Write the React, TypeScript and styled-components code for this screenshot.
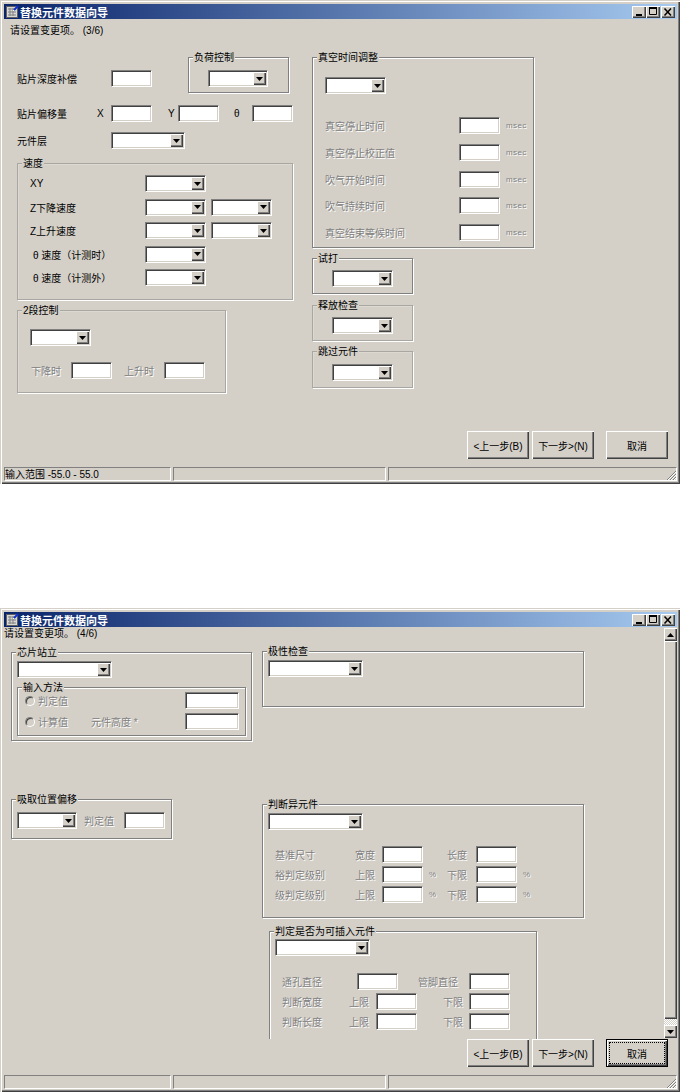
import React from 'react'
import styled, { createGlobalStyle } from 'styled-components'

const GlobalStyle = createGlobalStyle`
  html, body {
    margin: 0;
    padding: 0;
    background: #ffffff;
  }
  body {
    font-family: "Liberation Sans", "Noto Sans CJK SC", sans-serif;
    font-size: 10px;
    color: #000000;
  }
`

const Page = styled.div`
  width: 680px;
  display: flex;
  flex-direction: column;
  gap: 124px;
`

const Win = styled.div`
  box-sizing: border-box;
  height: 484px;
  padding: 4px 3px 3px 4px;
  display: flex;
  flex-direction: column;
  background: #d4d0c8;
  box-shadow: inset 1px 1px 0 #d4d0c8, inset 2px 2px 0 #ffffff, inset -1px -1px 0 #404040, inset -2px -2px 0 #808080;
`

const TitleBar = styled.div`
  flex: none;
  height: 15px;
  display: flex;
  align-items: center;
  padding: 0 2px;
  background: linear-gradient(90deg, #0a246a, #a6caf0);
`

const TitleText = styled.span`
  margin-left: 1px;
  font-size: 11px;
  font-weight: 700;
  color: #ffffff;
  white-space: nowrap;
`

const TitleButtons = styled.div`
  margin-left: auto;
  display: flex;
`

const TitleButton = styled.button<{ $gap?: number }>`
  box-sizing: border-box;
  width: 14px;
  height: 12px;
  padding: 0;
  margin-left: ${p => p.$gap ?? 0}px;
  border: none;
  background: #d4d0c8;
  box-shadow: inset 1px 1px 0 #ffffff, inset -1px -1px 0 #404040, inset -2px -2px 0 #808080;
  display: flex;
  align-items: center;
  justify-content: center;
`

const Client = styled.div`
  flex: 1;
  min-height: 0;
  display: flex;
  flex-direction: column;
`

const Prompt = styled.div<{ $left: number; $top: number; $h: number }>`
  flex: none;
  height: ${p => p.$h}px;
  line-height: ${p => p.$h}px;
  margin-top: ${p => p.$top}px;
  padding-left: ${p => p.$left}px;
  white-space: pre;
`

const Columns = styled.div<{ $left: number; $top: number }>`
  display: flex;
  align-items: flex-start;
  margin-top: ${p => p.$top}px;
  padding-left: ${p => p.$left}px;
`

const Column = styled.div<{ $w: number; $left?: number; $top?: number }>`
  flex: none;
  width: ${p => p.$w}px;
  margin-left: ${p => p.$left ?? 0}px;
  margin-top: ${p => p.$top ?? 0}px;
`

const Group = styled.div<{ $w: number; $h: number; $pad: string; $top?: number; $left?: number; $faint?: boolean }>`
  box-sizing: border-box;
  position: relative;
  width: ${p => p.$w}px;
  height: ${p => p.$h}px;
  margin-top: ${p => p.$top ?? 0}px;
  margin-left: ${p => p.$left ?? 0}px;
  padding: ${p => p.$pad};
  border: 1px solid ${p => (p.$faint ? '#a9a7a1' : '#808080')};
  box-shadow: 1px 1px 0 #ffffff, inset 1px 1px 0 ${p => (p.$faint ? '#dcd9d2' : '#ffffff')};
`

const Legend = styled.span`
  position: absolute;
  top: -6px;
  left: 4px;
  padding: 0 1px;
  line-height: 12px;
  background: #d4d0c8;
  white-space: nowrap;
`

const Row = styled.div<{ $top?: number; $left?: number }>`
  display: flex;
  align-items: center;
  height: 17px;
  margin-top: ${p => p.$top ?? 0}px;
  margin-left: ${p => p.$left ?? 0}px;
`

const HeadRow = styled.div`
  display: flex;
  align-items: flex-start;
  height: 36px;
`

const Rows = styled.div<{ $gap: number; $top?: number; $left?: number }>`
  display: flex;
  flex-direction: column;
  gap: ${p => p.$gap}px;
  margin-top: ${p => p.$top ?? 0}px;
  margin-left: ${p => p.$left ?? 0}px;
`

const Caption = styled.span<{ $w?: number; $indent?: number; $off?: boolean; $small?: boolean }>`
  flex: none;
  box-sizing: border-box;
  width: ${p => (p.$w ? `${p.$w}px` : 'auto')};
  padding-left: ${p => p.$indent ?? 0}px;
  white-space: nowrap;
  font-size: ${p => (p.$small ? 8 : 10)}px;
  letter-spacing: ${p => (p.$small ? 0.4 : 0)}px;
  color: ${p => (p.$off ? '#808080' : '#000000')};
  text-shadow: ${p => (p.$off ? '1px 1px 0 #ffffff' : 'none')};
`

const Input = styled.input<{ $w?: number }>`
  flex: none;
  box-sizing: border-box;
  width: ${p => p.$w ?? 41}px;
  height: 17px;
  margin: 0;
  padding: 0;
  border: 1px solid;
  border-color: #808080 #ffffff #ffffff #808080;
  box-shadow: inset 1px 1px 0 #404040, inset -1px -1px 0 #d4d0c8;
  background: #ffffff;
  outline: none;
`

const SelectBox = styled.div<{ $w: number }>`
  flex: none;
  box-sizing: border-box;
  width: ${p => p.$w}px;
  height: 17px;
  padding: 1px;
  border: 1px solid;
  border-color: #808080 #ffffff #ffffff #808080;
  box-shadow: inset 1px 1px 0 #404040, inset -1px -1px 0 #d4d0c8;
  background: #ffffff;
  display: flex;
  justify-content: flex-end;
`

const SelectArrow = styled.span`
  width: 13px;
  height: 100%;
  background: #d4d0c8;
  box-shadow: inset 1px 1px 0 #ffffff, inset -1px -1px 0 #404040, inset -2px -2px 0 #808080;
  display: flex;
  align-items: center;
  justify-content: center;
`

const Radio = styled.span`
  flex: none;
  box-sizing: border-box;
  width: 10px;
  height: 10px;
  margin-right: 3px;
  border: 1px solid;
  border-radius: 50%;
  border-color: #808080 #ffffff #ffffff #808080;
  background: #d4d0c8;
  box-shadow: inset 1px 1px 0 #404040;
`

const Footer = styled.div`
  flex: none;
  display: flex;
  justify-content: flex-end;
  gap: 3px;
  height: 28px;
  margin-top: auto;
  margin-bottom: 8px;
  padding-right: 9px;
`

const PushButton = styled.button<{ $left?: number; $primary?: boolean }>`
  box-sizing: border-box;
  position: relative;
  width: 62px;
  height: 28px;
  margin: 0 0 0 ${p => p.$left ?? 0}px;
  padding: 0;
  border: ${p => (p.$primary ? '1px solid #000000' : 'none')};
  background: #d4d0c8;
  box-shadow: inset 1px 1px 0 #ffffff, inset -1px -1px 0 #404040, inset -2px -2px 0 #808080;
  font: inherit;
  color: #000000;
  white-space: nowrap;
`

const FocusRing = styled.span`
  position: absolute;
  inset: 2px;
  border: 1px dotted #000000;
`

const StatusBar = styled.div`
  flex: none;
  height: 14px;
  display: flex;
  gap: 2px;
`

const StatusPane = styled.div<{ $w?: number }>`
  box-sizing: border-box;
  position: relative;
  flex: ${p => (p.$w ? `none` : 1)};
  width: ${p => (p.$w ? `${p.$w}px` : 'auto')};
  line-height: 13px;
  border: 1px solid;
  border-color: #808080 #ffffff #ffffff #808080;
  white-space: nowrap;
`

const Grip = styled.svg`
  position: absolute;
  right: -1px;
  bottom: -1px;
`

const ScrollArea = styled.div`
  flex: none;
  height: 412px;
  display: flex;
`

const ScrollContent = styled.div`
  flex: 1;
  min-width: 0;
  overflow: hidden;
`

const ScrollBar = styled.div`
  flex: none;
  width: 13px;
  margin: 1px 0;
  display: flex;
  flex-direction: column;
`

const ScrollArrow = styled.div`
  flex: none;
  height: 13px;
  background: #d4d0c8;
  box-shadow: inset 1px 1px 0 #ffffff, inset -1px -1px 0 #404040, inset -2px -2px 0 #808080;
  display: flex;
  align-items: center;
  justify-content: center;
`

const ScrollThumb = styled.div`
  flex: 1;
  background: #d4d0c8;
  box-shadow: inset 1px 1px 0 #ffffff, inset -1px -1px 0 #404040, inset -2px -2px 0 #808080;
`

const ScrollTrack = styled.div`
  flex: none;
  height: 6px;
  background: repeating-conic-gradient(#ffffff 0 25%, #d4d0c8 0 50%) 0 0 / 2px 2px;
`

const Arrow = ({ up }: { up?: boolean }) => (
  <svg width="7" height="4" viewBox="0 0 7 4">
    <path d={up ? 'M3.5 0 7 4H0z' : 'M0 0h7L3.5 4z'} fill="#000000" />
  </svg>
)

const Select = ({ w }: { w: number }) => (
  <SelectBox $w={w}>
    <SelectArrow>
      <Arrow />
    </SelectArrow>
  </SelectBox>
)

const AppIcon = () => (
  <svg width="13" height="13" viewBox="0 0 13 13">
    <rect x="0.5" y="1.5" width="11" height="11" fill="#d8d8d8" stroke="#606060" />
    <path d="M2 4h8M2 7h8M2 10h8M4 3v8M7 3v8" stroke="#808080" strokeWidth="1" />
    <path d="M8 5 12 1" stroke="#1030d0" strokeWidth="2" />
    <path d="M7 6 8 5" stroke="#ffffff" strokeWidth="1" />
  </svg>
)

const WindowTitle = () => (
  <TitleBar>
    <AppIcon />
    <TitleText>替换元件数据向导</TitleText>
    <TitleButtons>
      <TitleButton>
        <svg width="10" height="8" viewBox="0 0 10 8">
          <rect x="2" y="6" width="6" height="2" fill="#000000" />
        </svg>
      </TitleButton>
      <TitleButton>
        <svg width="10" height="9" viewBox="0 0 10 9">
          <path d="M1.5 1.5h7v6h-7z" fill="none" stroke="#000000" />
          <rect x="1" y="0" width="8" height="2" fill="#000000" />
        </svg>
      </TitleButton>
      <TitleButton $gap={1}>
        <svg width="10" height="8" viewBox="0 0 10 8">
          <path d="M1.5 0.5 8 7.5M8 0.5 1.5 7.5" stroke="#000000" strokeWidth="1.5" />
        </svg>
      </TitleButton>
    </TitleButtons>
  </TitleBar>
)

const WindowFooter = ({ focused }: { focused?: boolean }) => (
  <Footer>
    <PushButton>&lt;上一步(B)</PushButton>
    <PushButton>下一步&gt;(N)</PushButton>
    <PushButton $left={9} $primary={focused}>
      {focused && <FocusRing />}
      取消
    </PushButton>
  </Footer>
)

const WindowStatus = ({ text }: { text?: string }) => (
  <StatusBar>
    <StatusPane $w={167}>{text}</StatusPane>
    <StatusPane $w={213} />
    <StatusPane>
      <Grip width="12" height="12" viewBox="0 0 12 12">
        <path d="M11 2 2 11M11 5 5 11M11 8 8 11" stroke="#808080" />
        <path d="M11 3 3 11M11 6 6 11M11 9 9 11" stroke="#ffffff" />
      </Grip>
    </StatusPane>
  </StatusBar>
)

const vacuumRows = ['真空停止时间', '真空停止校正值', '吹气开始时间', '吹气持续时间', '真空结束等候时间']

const speedRows = [
  { label: 'XY', double: false, indent: 0 },
  { label: 'Z下降速度', double: true, indent: 0 },
  { label: 'Z上升速度', double: true, indent: 0 },
  { label: 'θ 速度（计测时）', double: false, indent: 3 },
  { label: 'θ 速度（计测外）', double: false, indent: 3 },
]

const StepThree = () => (
  <Win>
    <WindowTitle />
    <Client>
      <Prompt $left={6} $top={5} $h={14}>
        请设置变更项。 (3/6)
      </Prompt>
      <Columns $left={13} $top={19}>
        <Column $w={276}>
          <HeadRow>
            <Row $top={13}>
              <Caption $w={94}>贴片深度补偿</Caption>
              <Input />
              <Caption $w={36} />
            </Row>
            <Group $w={101} $h={36} $pad="12px 0 0 19px">
              <Legend>负荷控制</Legend>
              <Select w={60} />
            </Group>
          </HeadRow>
          <Row $top={12}>
            <Caption $w={80}>贴片偏移量</Caption>
            <Caption $w={14}>X</Caption>
            <Input />
            <Caption $w={26} $indent={16}>Y</Caption>
            <Input />
            <Caption $w={33} $indent={15}>θ</Caption>
            <Input />
          </Row>
          <Row $top={10}>
            <Caption $w={94}>元件层</Caption>
            <Select w={74} />
          </Row>
          <Group $w={276} $h={137} $top={14} $pad="11px 0 0 12px" $faint>
            <Legend>速度</Legend>
            <Rows $gap={6.5}>
              {speedRows.map(row => (
                <Row key={row.label}>
                  <Caption $w={115} $indent={row.indent}>{row.label}</Caption>
                  <Select w={61} />
                  {row.double && <Caption $w={5} />}
                  {row.double && <Select w={61} />}
                </Row>
              ))}
            </Rows>
          </Group>
          <Group $w={209} $h={83} $top={10} $pad="18px 0 0 12px" $faint>
            <Legend>2段控制</Legend>
            <Select w={61} />
            <Row $top={16}>
              <Caption $w={41} $indent={1} $off>下降时</Caption>
              <Input />
              <Caption $w={52} $indent={12} $off>上升时</Caption>
              <Input />
            </Row>
          </Group>
        </Column>
        <Column $w={222} $left={19}>
          <Group $w={222} $h={191} $pad="19px 0 0 12px">
            <Legend>真空时间调整</Legend>
            <Select w={61} />
            <Rows $gap={9.75} $top={23}>
              {vacuumRows.map(label => (
                <Row key={label}>
                  <Caption $w={134} $off>{label}</Caption>
                  <Input />
                  <Caption $indent={6} $off $small>msec</Caption>
                </Row>
              ))}
            </Rows>
          </Group>
          <Group $w={101} $h={36} $top={10} $pad="11px 0 0 19px">
            <Legend>试打</Legend>
            <Select w={61} />
          </Group>
          <Group $w={101} $h={36} $top={11} $pad="11px 0 0 19px" $faint>
            <Legend>释放检查</Legend>
            <Select w={61} />
          </Group>
          <Group $w={101} $h={37} $top={10} $pad="12px 0 0 19px" $faint>
            <Legend>跳过元件</Legend>
            <Select w={61} />
          </Group>
        </Column>
      </Columns>
      <WindowFooter />
    </Client>
    <WindowStatus text="输入范围 -55.0 - 55.0" />
  </Win>
)

const StepFour = () => (
  <Win>
    <WindowTitle />
    <Client>
      <ScrollArea>
        <ScrollContent>
          <Prompt $left={0} $top={0} $h={13}>
            请设置变更项。 (4/6)
          </Prompt>
          <Columns $left={7} $top={0}>
            <Column $w={241}>
              <Group $w={241} $h={89} $top={12} $pad="8px 0 0 5px">
                <Legend>芯片站立</Legend>
                <Select w={95} />
                <Group $w={229} $h={49} $top={9} $pad="4px 6px 0 7px">
                  <Legend>输入方法</Legend>
                  <Rows $gap={4}>
                    <Row>
                      <Radio />
                      <Caption $w={147} $off>判定值</Caption>
                      <Input $w={54} />
                    </Row>
                    <Row>
                      <Radio />
                      <Caption $w={53} $off>计算值</Caption>
                      <Caption $w={94} $off>元件高度 *</Caption>
                      <Input $w={54} />
                    </Row>
                  </Rows>
                </Group>
              </Group>
              <Group $w={161} $h={40} $top={58} $pad="12px 0 0 5px">
                <Legend>吸取位置偏移</Legend>
                <Row>
                  <Select w={60} />
                  <Caption $w={47} $indent={7} $off>判定值</Caption>
                  <Input />
                </Row>
              </Group>
            </Column>
            <Column $w={322} $left={10}>
              <Group $w={322} $h={56} $top={11} $pad="8px 0 0 5px">
                <Legend>极性检查</Legend>
                <Select w={95} />
              </Group>
              <Group $w={322} $h={114} $top={97} $pad="8px 0 0 5px">
                <Legend>判断异元件</Legend>
                <Select w={95} />
                <Rows $gap={3} $top={16} $left={7}>
                  <Row>
                    <Caption $w={80} $off>基准尺寸</Caption>
                    <Caption $w={27} $off>宽度</Caption>
                    <Input />
                    <Caption $w={24} />
                    <Caption $w={29} $off>长度</Caption>
                    <Input />
                  </Row>
                  <Row>
                    <Caption $w={80} $off>裕判定级别</Caption>
                    <Caption $w={27} $off>上限</Caption>
                    <Input />
                    <Caption $w={24} $indent={6} $off $small>%</Caption>
                    <Caption $w={29} $off>下限</Caption>
                    <Input />
                    <Caption $indent={6} $off $small>%</Caption>
                  </Row>
                  <Row>
                    <Caption $w={80} $off>级判定级别</Caption>
                    <Caption $w={27} $off>上限</Caption>
                    <Input />
                    <Caption $w={24} $indent={6} $off $small>%</Caption>
                    <Caption $w={29} $off>下限</Caption>
                    <Input />
                    <Caption $indent={6} $off $small>%</Caption>
                  </Row>
                </Rows>
              </Group>
              <Group $w={268} $h={130} $top={13} $left={7} $pad="7px 0 0 5px">
                <Legend>判定是否为可插入元件</Legend>
                <Select w={95} />
                <Rows $gap={3} $top={17} $left={7}>
                  <Row>
                    <Caption $w={75} $off>通孔直径</Caption>
                    <Input />
                    <Caption $w={71} $indent={20} $off>管脚直径</Caption>
                    <Input />
                  </Row>
                  <Row>
                    <Caption $w={67} $off>判断宽度</Caption>
                    <Caption $w={27} $off>上限</Caption>
                    <Input />
                    <Caption $w={52} $indent={26} $off>下限</Caption>
                    <Input />
                  </Row>
                  <Row>
                    <Caption $w={67} $off>判断长度</Caption>
                    <Caption $w={27} $off>上限</Caption>
                    <Input />
                    <Caption $w={52} $indent={26} $off>下限</Caption>
                    <Input />
                  </Row>
                </Rows>
              </Group>
            </Column>
          </Columns>
        </ScrollContent>
        <ScrollBar>
          <ScrollArrow>
            <Arrow up />
          </ScrollArrow>
          <ScrollThumb />
          <ScrollTrack />
          <ScrollArrow>
            <Arrow />
          </ScrollArrow>
        </ScrollBar>
      </ScrollArea>
      <WindowFooter focused />
    </Client>
    <WindowStatus />
  </Win>
)

const App: React.FC = () => (
  <>
    <GlobalStyle />
    <Page>
      <StepThree />
      <StepFour />
    </Page>
  </>
)

export default App
